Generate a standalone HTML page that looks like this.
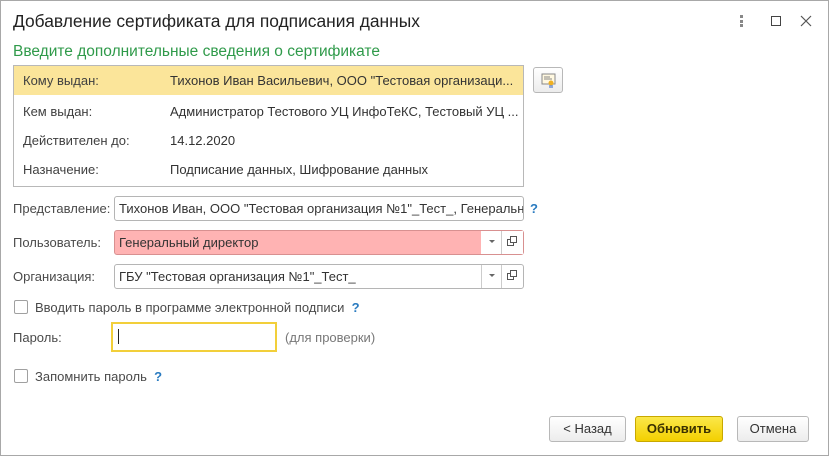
<!DOCTYPE html>
<html><head><meta charset="utf-8"><style>
*{box-sizing:border-box;margin:0;padding:0}
body{width:829px;height:456px;background:#fff;font-family:"Liberation Sans",Arial,sans-serif;font-size:13px;color:#404040;position:relative;overflow:hidden}
.win{position:absolute;left:0;top:0;width:829px;height:456px;border:1px solid #a8a8a8}
.a{position:absolute;white-space:nowrap}
.title{left:13px;top:11px;font-size:17.4px;color:#222}
.sub{left:13px;top:43px;font-size:15.5px;color:#2f9a4a}
.tbl{left:13px;top:65px;width:511px;height:122px;border:1px solid #b8b8b8}
.row{position:absolute;left:0;width:509px;height:29px;line-height:29px}
.row span{position:absolute}
.inp{position:absolute;border:1px solid #b5b5b5;border-radius:3px;height:25px;line-height:23px;padding-left:4px;color:#333;overflow:hidden;white-space:nowrap;font-size:13px}
.btn{position:absolute;border:1px solid #b8b8b8;border-radius:3px;height:26px;line-height:24px;text-align:center;background:linear-gradient(#fff,#ececec);font-size:13px;color:#333}
.cb{position:absolute;width:14px;height:14px;border:1px solid #a0a0a0;border-radius:2px;background:#fff}
.q{color:#2a7bc0;font-weight:bold}
.lab{color:#4a4a4a}
</style></head><body>
<div class="win"></div>
<div class="a title">Добавление сертификата для подписания данных</div>
<div class="a" style="left:740px;top:15px;width:3px;height:12px;"><div style="width:3px;height:3px;background:#888;margin-bottom:1.5px"></div><div style="width:3px;height:3px;background:#888;margin-bottom:1.5px"></div><div style="width:3px;height:3px;background:#888"></div></div>
<div class="a" style="left:771px;top:16px;width:10px;height:10px;border:1px solid #444"></div>
<svg class="a" style="left:800px;top:15px" width="12" height="12"><path d="M1 1L11 11M11 1L1 11" stroke="#555" stroke-width="1.2"/></svg>
<div class="a sub">Введите дополнительные сведения о сертификате</div>
<div class="a tbl">
 <div class="row" style="top:0;background:#fbe59a"><span style="left:9px">Кому выдан:</span><span style="left:156px;color:#333">Тихонов Иван Васильевич, ООО "Тестовая организаци...</span></div>
 <div class="row" style="top:31px"><span style="left:9px">Кем выдан:</span><span style="left:156px;color:#333">Администратор Тестового УЦ ИнфоТеКС, Тестовый УЦ ...</span></div>
 <div class="row" style="top:60px"><span style="left:9px">Действителен до:</span><span style="left:156px;color:#333">14.12.2020</span></div>
 <div class="row" style="top:89px"><span style="left:9px">Назначение:</span><span style="left:156px;color:#333">Подписание данных, Шифрование данных</span></div>
</div>
<div class="btn" style="left:533px;top:67px;width:30px;height:26px">
<svg width="28" height="24"><rect x="8" y="6" width="13" height="10" fill="#fff8e0" stroke="#888"/><path d="M10 9h6M10 11h8" stroke="#888"/><circle cx="17" cy="15" r="2.5" fill="#f0b020"/><path d="M16 17v3M18 17v3" stroke="#3060c0"/></svg></div>

<div class="a lab" style="left:13px;top:201px">Представление:</div>
<div class="inp" style="left:114px;top:196px;width:410px;">Тихонов Иван, ООО "Тестовая организация №1"_Тест_, Генеральны</div>
<div class="a q" style="left:530px;top:201px">?</div>

<div class="a lab" style="left:13px;top:235px">Пользователь:</div>
<div class="inp" style="left:114px;top:230px;width:410px;background:#ffb3b3;border-color:#d89090">Генеральный директор</div>
<div class="a" style="left:481px;top:231px;width:1px;height:23px;background:#ccc"></div>
<div class="a" style="left:481px;top:231px;width:20px;height:23px;background:#fff"></div>
<div class="a" style="left:501px;top:231px;width:22px;height:23px;background:#fff;border-left:1px solid #ccc"></div>
<div class="a" style="left:489px;top:240px;border:3px solid transparent;border-top:3px solid #666"></div>
<svg class="a" style="left:507px;top:236px" width="11" height="11"><rect x="3.5" y="0.5" width="6" height="6" fill="none" stroke="#555"/><path d="M3.5 3.5h-3v6h6v-3" fill="none" stroke="#555"/></svg>

<div class="a lab" style="left:13px;top:269px">Организация:</div>
<div class="inp" style="left:114px;top:264px;width:410px;">ГБУ "Тестовая организация №1"_Тест_</div>
<div class="a" style="left:481px;top:265px;width:1px;height:23px;background:#ccc"></div>
<div class="a" style="left:501px;top:265px;width:1px;height:23px;background:#ccc"></div>
<div class="a" style="left:489px;top:274px;border:3px solid transparent;border-top:3px solid #666"></div>
<svg class="a" style="left:507px;top:270px" width="11" height="11"><rect x="3.5" y="0.5" width="6" height="6" fill="none" stroke="#555"/><path d="M3.5 3.5h-3v6h6v-3" fill="none" stroke="#555"/></svg>

<div class="cb" style="left:14px;top:300px"></div>
<div class="a lab" style="left:35px;top:300px">Вводить пароль в программе электронной подписи <span class="q">&nbsp;?</span></div>

<div class="a lab" style="left:13px;top:330px">Пароль:</div>
<div class="a" style="left:111px;top:322px;width:166px;height:30px;border:2px solid #f2cf3a"></div>
<div class="a" style="left:118px;top:329px;width:1px;height:15px;background:#222"></div>
<div class="a" style="left:285px;top:330px;color:#777">(для проверки)</div>

<div class="cb" style="left:14px;top:369px"></div>
<div class="a lab" style="left:35px;top:369px">Запомнить пароль <span class="q">&nbsp;?</span></div>

<div class="btn" style="left:549px;top:416px;width:77px">&lt; Назад</div>
<div class="btn" style="left:635px;top:416px;width:88px;background:linear-gradient(#fbe84a,#f3d000);border-color:#c8a800;font-weight:bold;color:#3a3000">Обновить</div>
<div class="btn" style="left:737px;top:416px;width:72px">Отмена</div>
</body></html>
